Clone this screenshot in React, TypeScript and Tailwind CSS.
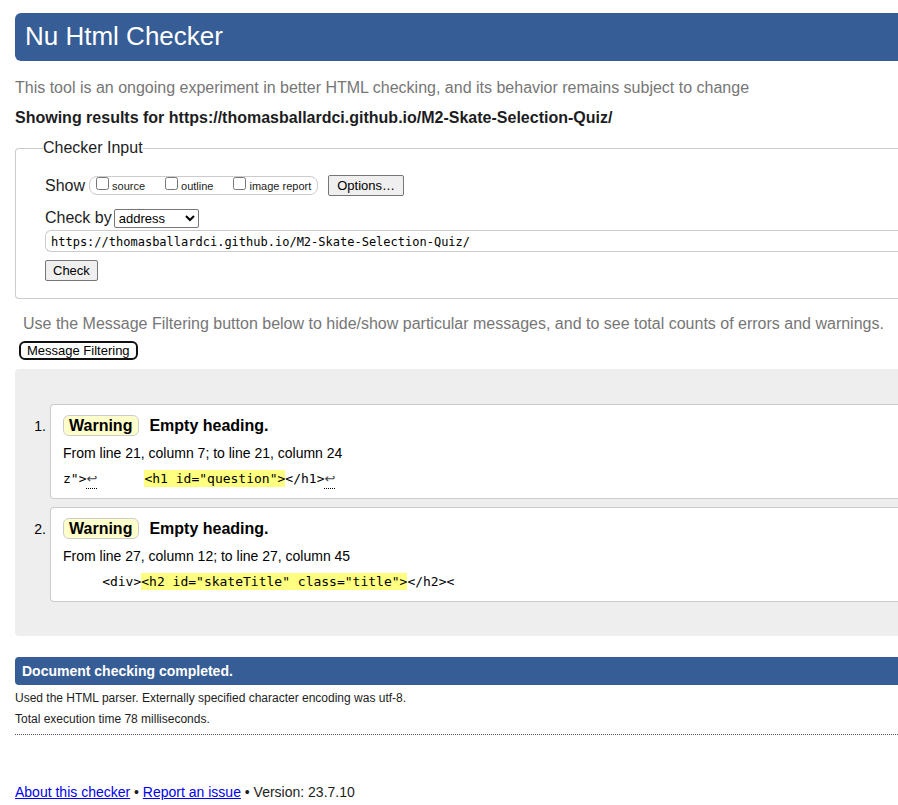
import type { ReactNode } from "react";

const sans = "font-['Liberation_Sans',Arial,sans-serif]";
const mono = "font-['DejaVu_Sans_Mono','Liberation_Mono',monospace]";

function Toggle({ id, children }: { id: string; children: ReactNode }) {
  return (
    <span className="flex items-start gap-[3px]">
      <input id={id} type="checkbox" className="size-[13px]" />
      <label htmlFor={id} className="pt-px text-[11px] leading-[17px]">
        {children}
      </label>
    </span>
  );
}

function LineBreak() {
  return (
    <abbr
      title="line break"
      className="inline-block h-[19px] w-[11px] border-b border-dotted border-black text-center align-top font-['DejaVu_Sans',sans-serif] leading-[17px] text-[#444] no-underline"
    >
      ↩
    </abbr>
  );
}

function Message({ index, location, children }: { index: number; location: string; children: ReactNode }) {
  return (
    <li className="flex">
      <span className="w-[35px] pt-[13px] pr-1 text-right text-sm leading-[18px]">{index}.</span>
      <div className="flex-1 rounded-l border border-r-0 border-[#ccc] bg-white pt-[10px] pr-3 pb-[9px] pl-3">
        <p className="flex items-center gap-[10px] text-base leading-[19px] font-bold">
          <strong className="rounded-md border border-[#ccc] bg-[#ffc] pr-[6px] pl-[5px]">Warning</strong>
          <span>Empty heading.</span>
        </p>
        <p className="mt-2 text-sm leading-[18px]">{location}</p>
        <p className={`mt-2 h-[19px] text-[13px] leading-[17px] whitespace-pre ${mono}`}>{children}</p>
      </div>
    </li>
  );
}

export default function App() {
  return (
    <div className={`bg-white pt-[13px] pl-[15px] text-[#1c1d22] ${sans}`}>
      <h1 className="rounded-l-md bg-[#365d95] px-[10px] pt-[7px] pb-[9px] text-[26px] leading-8 text-white">
        Nu Html Checker
      </h1>
      <p className="mt-[17px] text-base leading-5 text-[#767676]">
        This tool is an ongoing experiment in better HTML checking, and its behavior remains subject to change
      </p>
      <h2 className="mt-[10px] text-base leading-5 font-bold">
        Showing results for https://thomasballardci.github.io/M2-Skate-Selection-Quiz/
      </h2>

      <form onSubmit={(e) => e.preventDefault()}>
        <fieldset className="mt-[10px] rounded-l border border-r-0 border-[#ccc] pb-[17px] pl-[29px]">
          <legend className="-ml-0.5 pb-0.5 text-base leading-[19px]">Checker Input</legend>
          <div className="mt-4 flex items-center">
            <span className="text-base leading-5">Show</span>
            <div className="ml-1 flex h-[19px] gap-5 rounded-lg border border-[#ccc] pr-[6px] pl-[6px]">
              <Toggle id="source">source</Toggle>
              <Toggle id="outline">outline</Toggle>
              <Toggle id="images">image report</Toggle>
            </div>
            <button
              type="button"
              className="ml-[10px] h-[21px] rounded-[2px] border border-[#767676] bg-[#efefef] px-2 text-[13px] leading-[19px] text-black"
            >
              Options…
            </button>
          </div>
          <div className="mt-3 flex items-center">
            <label htmlFor="docselect" className="text-base leading-5">
              Check by
            </label>
            <select
              id="docselect"
              className="ml-0.5 h-[19px] w-[85px] rounded-[2px] border border-[#767676] bg-white text-[13px] leading-[17px] text-black"
            >
              <option>address</option>
              <option>file upload</option>
              <option>text input</option>
            </select>
          </div>
          <input
            type="url"
            aria-label="Address"
            defaultValue="https://thomasballardci.github.io/M2-Skate-Selection-Quiz/"
            className={`mt-[2px] block h-[22px] w-full rounded-l-md border border-r-0 border-[#ccc] px-[5px] pt-0.5 text-xs text-black ${mono}`}
          />
          <button
            type="submit"
            className="mt-2 block h-[21px] rounded-[2px] border border-[#767676] bg-[#efefef] px-[7px] text-[13px] leading-[19px] text-black"
          >
            Check
          </button>
        </fieldset>
      </form>

      <p className="mt-[15px] pl-2 text-base leading-5 text-[#767676]">
        Use the Message Filtering button below to hide/show particular messages, and to see total counts of errors and
        warnings.
      </p>
      <button
        type="button"
        className="mt-[7px] ml-1 block h-[19px] rounded-md border-2 border-[#101010] bg-white px-[6px] text-[13px] leading-[15px] text-black"
      >
        Message Filtering
      </button>

      <ol className="mt-[9px] flex flex-col gap-2 rounded-l bg-[#eee] pt-[35px] pb-[34px] text-black">
        <Message index={1} location="From line 21, column 7; to line 21, column 24">
          {'z">'}
          <LineBreak />
          {"      "}
          <mark className="bg-[#ffff80] py-px text-black">{'<h1 id="question">'}</mark>
          {"</h1>"}
          <LineBreak />
        </Message>
        <Message index={2} location="From line 27, column 12; to line 27, column 45">
          {"     <div>"}
          <mark className="bg-[#ffff80] py-px text-black">{'<h2 id="skateTitle" class="title">'}</mark>
          {"</h2><"}
        </Message>
      </ol>

      <p className="mt-[21px] rounded-l bg-[#365d95] px-[7px] text-sm leading-7 font-bold text-white">
        Document checking completed.
      </p>
      <div className="border-b border-dotted border-[#555] pt-[3px] pb-1 text-xs leading-[21px]">
        <p>Used the HTML parser. Externally specified character encoding was utf-8.</p>
        <p>Total execution time 78 milliseconds.</p>
      </div>

      <footer className="mt-[47px] text-sm leading-5">
        <a href="#about" className="text-[#0000ee] underline">
          About this checker
        </a>{" "}
        •{" "}
        <a href="#issues" className="text-[#0000ee] underline">
          Report an issue
        </a>{" "}
        • Version: 23.7.10
      </footer>
    </div>
  );
}
